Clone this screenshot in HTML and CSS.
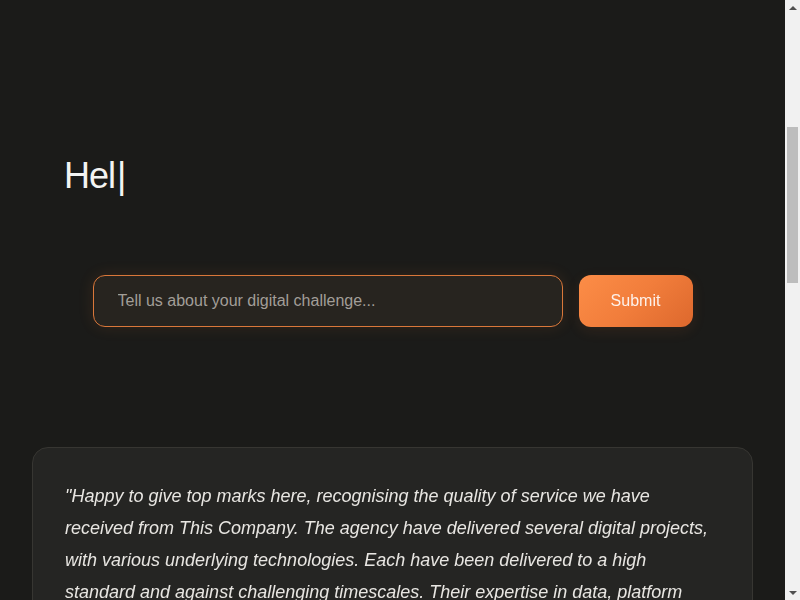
FILE: index.html
```html
<!DOCTYPE html>
<html lang="en">
<head>
<meta charset="utf-8">
<title>Hello</title>
<link rel="stylesheet" href="styles.css">
</head>
<body>
<div class="frame">
  <main class="viewport">
    <section class="hero">
      <h1 class="title">Hel<span class="cursor">|</span></h1>
      <form class="ask">
        <input class="ask-input" id="ask-input" type="text" placeholder="Tell us about your digital challenge..." autofocus>
        <button class="ask-btn" type="button">Submit</button>
      </form>
    </section>
    <section class="quote-card">
      <p class="quote">"Happy to give top marks here, recognising the quality of service we have received from This Company. The agency have delivered several digital projects, with various underlying technologies. Each have been delivered to a high standard and against challenging timescales. Their expertise in data, platform engineering and cloud has been invaluable to our organisation, and we would recommend them to anyone looking for a trusted digital partner."</p>
      <p class="author">— Head of Digital, Client Organisation</p>
    </section>
  </main>
  <div class="scrollbar" aria-hidden="true">
    <div class="sb-btn">
      <svg width="8" height="4" viewBox="0 0 8 4"><path d="M0 4L4 0L8 4Z" fill="#505050"/></svg>
    </div>
    <div class="sb-track"><div class="sb-thumb"></div></div>
    <div class="sb-btn">
      <svg width="8" height="4" viewBox="0 0 8 4"><path d="M0 0L8 0L4 4Z" fill="#505050"/></svg>
    </div>
  </div>
</div>
<script src="script.js"></script>
</body>
</html>
```
FILE: styles.css
```css
html, body {
  margin: 0;
  padding: 0;
  background: #1b1b19;
}
body {
  font-family: "Liberation Sans", Arial, sans-serif;
  color: #f4f4f2;
}
.frame {
  display: flex;
  height: 100vh;
  overflow: hidden;
}
.viewport {
  flex: 1;
  min-width: 0;
  height: 100vh;
  overflow: hidden;
}
.scrollbar {
  width: 15px;
  flex: none;
  display: flex;
  flex-direction: column;
  background: #f1f1f1;
}
.sb-btn {
  height: 15px;
  display: flex;
  align-items: center;
  justify-content: center;
}
.sb-btn svg {
  display: block;
}
.sb-track {
  flex: 1;
  padding: 112px 2px 0;
}
.sb-thumb {
  height: 156px;
  background: #bdbdbd;
}
.hero {
  padding: 154px 64px 0;
}
.title {
  margin: 0;
  font-size: 36px;
  font-weight: 400;
  line-height: 44px;
  letter-spacing: -1px;
  color: #f4f4f2;
}
.cursor {
  margin-left: 2px;
}
.ask {
  margin: 77px 0 0;
  display: flex;
  justify-content: center;
  gap: 16px;
}
.ask-input {
  box-sizing: border-box;
  width: 470px;
  height: 52px;
  padding: 0 24px;
  border: 1px solid #d9773a;
  border-radius: 12px;
  background: #27241f;
  color: #eeeeee;
  font-family: "Liberation Sans", Arial, sans-serif;
  font-size: 16px;
  outline: none;
  caret-color: #ffffff;
  box-shadow: 0 0 16px rgba(230, 120, 50, 0.12);
}
.ask-input::placeholder {
  color: #a29e98;
}
.ask-btn {
  width: 114px;
  height: 52px;
  border: none;
  border-radius: 12px;
  background: linear-gradient(135deg, #fc8d47 0%, #f17d3b 50%, #dd682d 100%);
  color: #fdf1ea;
  font-family: "Liberation Sans", Arial, sans-serif;
  font-size: 16px;
  box-shadow: 0 4px 14px rgba(240, 120, 50, 0.1);
}
.quote-card {
  margin: 120px 32px 0;
  padding: 32px;
  border: 1px solid #373632;
  border-radius: 16px;
  background: #252523;
}
.quote {
  margin: 0;
  font-size: 18px;
  line-height: 32px;
  font-style: italic;
  color: #e8e6e2;
}
.author {
  margin: 24px 0 0;
  font-size: 16px;
  color: #f08a4b;
}
```
FILE: script.js
```js
document.getElementById('ask-input').focus();
```
